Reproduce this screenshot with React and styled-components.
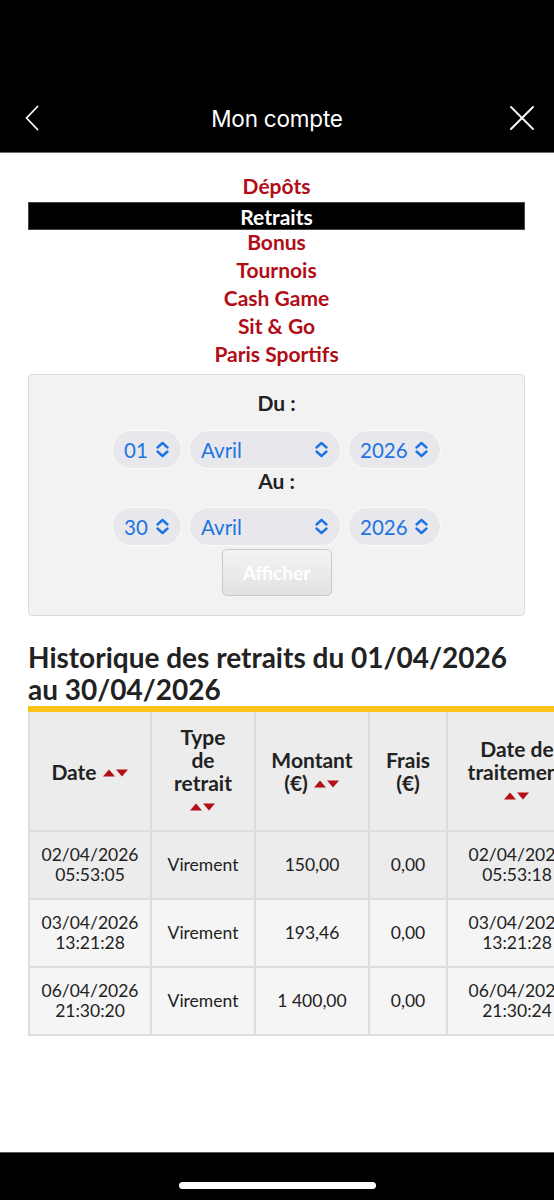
import React from 'react'
import styled, { createGlobalStyle } from 'styled-components'

const GlobalStyle = createGlobalStyle`
  html, body {
    margin: 0;
    padding: 0;
    background: #ffffff;
  }
  body {
    font-family: "Lato", "Noto Sans", sans-serif;
    color: #222222;
  }
  * {
    box-sizing: border-box;
  }
`

const Page = styled.div`
  display: flex;
  flex-direction: column;
  width: 554px;
  min-height: 1200px;
  overflow: hidden;
`

const TopBar = styled.header`
  background: #000000;
  padding-top: 84px;
  border-bottom: 1px solid #6e6e6e;
`

const NavRow = styled.div`
  display: grid;
  grid-template-columns: 1fr auto 1fr;
  align-items: center;
  height: 68px;
  padding: 0 18px 0 18px;
`

const NavTitle = styled.h1`
  margin: 0;
  font-family: "Inter", "Roboto", sans-serif;
  font-weight: 400;
  font-size: 22.5px;
  letter-spacing: -0.2px;
  color: #ffffff;
`

const NavButton = styled.button`
  display: flex;
  align-items: center;
  justify-content: center;
  width: 28px;
  height: 28px;
  padding: 0;
  border: none;
  background: none;
  justify-self: ${(p) => (p.end ? 'end' : 'start')};
`

const Main = styled.main`
  flex: 1;
  padding: 19px 29px 0 28px;
`

const Menu = styled.ul`
  list-style: none;
  margin: 0;
  padding: 0;
  text-align: center;
`

const MenuItem = styled.li`
  font-weight: 700;
  font-size: 21px;
  line-height: 28px;
  height: 28px;
  color: ${(p) => (p.active ? '#ffffff' : '#b00d17')};
  background: ${(p) => (p.active ? '#000000' : 'transparent')};
  border: ${(p) => (p.active ? '1px solid #444' : 'none')};
  margin: ${(p) => (p.active ? '2px 0 -2px' : '0')};
`

const FilterBox = styled.form`
  display: flex;
  flex-direction: column;
  align-items: center;
  margin-top: 6px;
  padding: 16px 0 19px;
  background: #f2f2f2;
  border: 1px solid #dcdcdc;
  border-radius: 4px;
`

const FieldLabel = styled.div`
  font-weight: 700;
  font-size: 21px;
  line-height: 24px;
  color: #222222;
`

const SelectRow = styled.div`
  display: flex;
  gap: 7px;
  margin-top: ${(p) => p.offset}px;
`

const SelectPill = styled.label`
  display: flex;
  align-items: center;
  width: ${(p) => p.width}px;
  height: 39px;
  padding: 0 11px 0 11px;
  background: #e8e8ec;
  border: 1.5px solid #fbfbfb;
  border-radius: 20px;
`

const NativeSelect = styled.select`
  flex: 1;
  min-width: 0;
  appearance: none;
  -webkit-appearance: none;
  border: none;
  background: transparent;
  padding: 0;
  font-family: "Lato", "Noto Sans", sans-serif;
  font-size: 20.5px;
  color: #1d74e2;
  outline: none;
`

const ShowButton = styled.button`
  margin-top: 3px;
  width: 110px;
  height: 47px;
  border: 1px solid #c8c8c8;
  border-radius: 5px;
  background: linear-gradient(#f4f4f4, #e2e2e2);
  font-family: "Lato", "Noto Sans", sans-serif;
  font-weight: 700;
  font-size: 19px;
  color: #ffffff;
`

const HistoryTitle = styled.h2`
  margin: 25px 0 1px;
  font-weight: 700;
  font-size: 28px;
  line-height: 32px;
  color: #222222;
`

const TableScroll = styled.div`
  margin-right: -29px;
  overflow: hidden;
  border-top: 6px solid #f9c31a;
`

const Table = styled.table`
  table-layout: fixed;
  width: 558px;
  border-collapse: collapse;
`

const HeadCell = styled.th`
  height: 119px;
  padding: 0 4px;
  background: #ececec;
  border: 2px solid #dddddd;
  border-top: none;
  font-weight: 700;
  font-size: 21px;
  line-height: 23px;
  color: #222222;
  white-space: pre-line;
  text-align: center;
`

const BodyRow = styled.tr`
  background: ${(p) => (p.shade ? '#ececec' : '#f5f5f5')};
`

const BodyCell = styled.td`
  height: 68px;
  padding: 0 4px;
  border: 2px solid #dddddd;
  font-size: 17.5px;
  line-height: 20px;
  color: #222222;
  white-space: pre-line;
  text-align: center;
`

const Arrows = styled.svg`
  display: inline-block;
  margin-left: ${(p) => (p.inline ? '6px' : '0')};
  vertical-align: 3px;
`

const BottomBar = styled.footer`
  display: flex;
  justify-content: center;
  height: 48px;
  background: #000000;
  border-top: 1px solid #5a5a5a;
`

const HomeIndicator = styled.div`
  width: 197px;
  height: 7px;
  margin-top: 29px;
  border-radius: 4px;
  background: #ffffff;
`

const menu = ['Dépôts', 'Retraits', 'Bonus', 'Tournois', 'Cash Game', 'Sit & Go', 'Paris Sportifs']

const months = ['Janvier', 'Février', 'Mars', 'Avril', 'Mai', 'Juin', 'Juillet', 'Août', 'Septembre', 'Octobre', 'Novembre', 'Décembre']

const columns = [
  { label: 'Date', width: 122, sort: 'inline' },
  { label: 'Type\nde\nretrait', width: 104, sort: 'below' },
  { label: 'Montant\n(€)', width: 114, sort: 'inline' },
  { label: 'Frais\n(€)', width: 78 },
  { label: 'Date de\ntraitement', width: 140, sort: 'below' }
]

const rows = [
  { date: '02/04/2026\n05:53:05', type: 'Virement', amount: '150,00', fee: '0,00', done: '02/04/2026\n05:53:18' },
  { date: '03/04/2026\n13:21:28', type: 'Virement', amount: '193,46', fee: '0,00', done: '03/04/2026\n13:21:28' },
  { date: '06/04/2026\n21:30:20', type: 'Virement', amount: '1\u00a0400,00', fee: '0,00', done: '06/04/2026\n21:30:24' }
]

const SortArrows = ({ inline }) => (
  <Arrows inline={inline} width='26' height='8' viewBox='0 0 26 8'>
    <polygon points='0,7.5 6,0.5 12,7.5' fill='#b30f18' />
    <polygon points='13,0.5 25,0.5 19,7.5' fill='#b30f18' />
  </Arrows>
)

const UpDown = () => (
  <svg width='15' height='17' viewBox='0 0 15 17' fill='none' stroke='#1d74e2' strokeWidth='2.4' strokeLinecap='round' strokeLinejoin='round'>
    <polyline points='2.5,6.5 7.5,2 12.5,6.5' />
    <polyline points='2.5,10.5 7.5,15 12.5,10.5' />
  </svg>
)

const DateSelect = ({ day, month, year }) => (
  <>
    <SelectPill width={70}>
      <NativeSelect defaultValue={day}>
        {Array.from({ length: 31 }, (_, i) => String(i + 1).padStart(2, '0')).map((d) => (
          <option key={d} value={d}>{d}</option>
        ))}
      </NativeSelect>
      <UpDown />
    </SelectPill>
    <SelectPill width={152}>
      <NativeSelect defaultValue={month}>
        {months.map((m) => (
          <option key={m} value={m}>{m}</option>
        ))}
      </NativeSelect>
      <UpDown />
    </SelectPill>
    <SelectPill width={93}>
      <NativeSelect defaultValue={year}>
        {['2024', '2025', '2026'].map((y) => (
          <option key={y} value={y}>{y}</option>
        ))}
      </NativeSelect>
      <UpDown />
    </SelectPill>
  </>
)

const App = () => (
  <Page>
    <GlobalStyle />
    <TopBar>
      <NavRow>
        <NavButton aria-label='Retour'>
          <svg width='14' height='26' viewBox='0 0 14 26' fill='none' stroke='#ffffff' strokeWidth='1.8' strokeLinecap='round' strokeLinejoin='round'>
            <polyline points='12.5,1.5 1.5,13 12.5,24.5' />
          </svg>
        </NavButton>
        <NavTitle>Mon compte</NavTitle>
        <NavButton end aria-label='Fermer'>
          <svg width='24' height='24' viewBox='0 0 24 24' fill='none' stroke='#ffffff' strokeWidth='1.8' strokeLinecap='round'>
            <line x1='1' y1='1' x2='23' y2='23' />
            <line x1='23' y1='1' x2='1' y2='23' />
          </svg>
        </NavButton>
      </NavRow>
    </TopBar>

    <Main>
      <Menu>
        {menu.map((name) => (
          <MenuItem key={name} active={name === 'Retraits'}>{name}</MenuItem>
        ))}
      </Menu>

      <FilterBox onSubmit={(e) => e.preventDefault()}>
        <FieldLabel>Du :</FieldLabel>
        <SelectRow offset={15}>
          <DateSelect day='01' month='Avril' year='2026' />
        </SelectRow>
        <FieldLabel>Au :</FieldLabel>
        <SelectRow offset={14}>
          <DateSelect day='30' month='Avril' year='2026' />
        </SelectRow>
        <ShowButton type='submit'>Afficher</ShowButton>
      </FilterBox>

      <HistoryTitle>Historique des retraits du 01/04/2026 au 30/04/2026</HistoryTitle>

      <TableScroll>
        <Table>
          <colgroup>
            {columns.map((c) => (
              <col key={c.label} style={{ width: c.width }} />
            ))}
          </colgroup>
          <thead>
            <tr>
              {columns.map((c) => (
                <HeadCell key={c.label}>
                  {c.label}
                  {c.sort === 'below' && <br />}
                  {c.sort && <SortArrows inline={c.sort === 'inline'} />}
                </HeadCell>
              ))}
            </tr>
          </thead>
          <tbody>
            {rows.map((r, i) => (
              <BodyRow key={r.date} shade={i === 0}>
                <BodyCell>{r.date}</BodyCell>
                <BodyCell>{r.type}</BodyCell>
                <BodyCell>{r.amount}</BodyCell>
                <BodyCell>{r.fee}</BodyCell>
                <BodyCell>{r.done}</BodyCell>
              </BodyRow>
            ))}
          </tbody>
        </Table>
      </TableScroll>
    </Main>

    <BottomBar>
      <HomeIndicator />
    </BottomBar>
  </Page>
)

export default App
